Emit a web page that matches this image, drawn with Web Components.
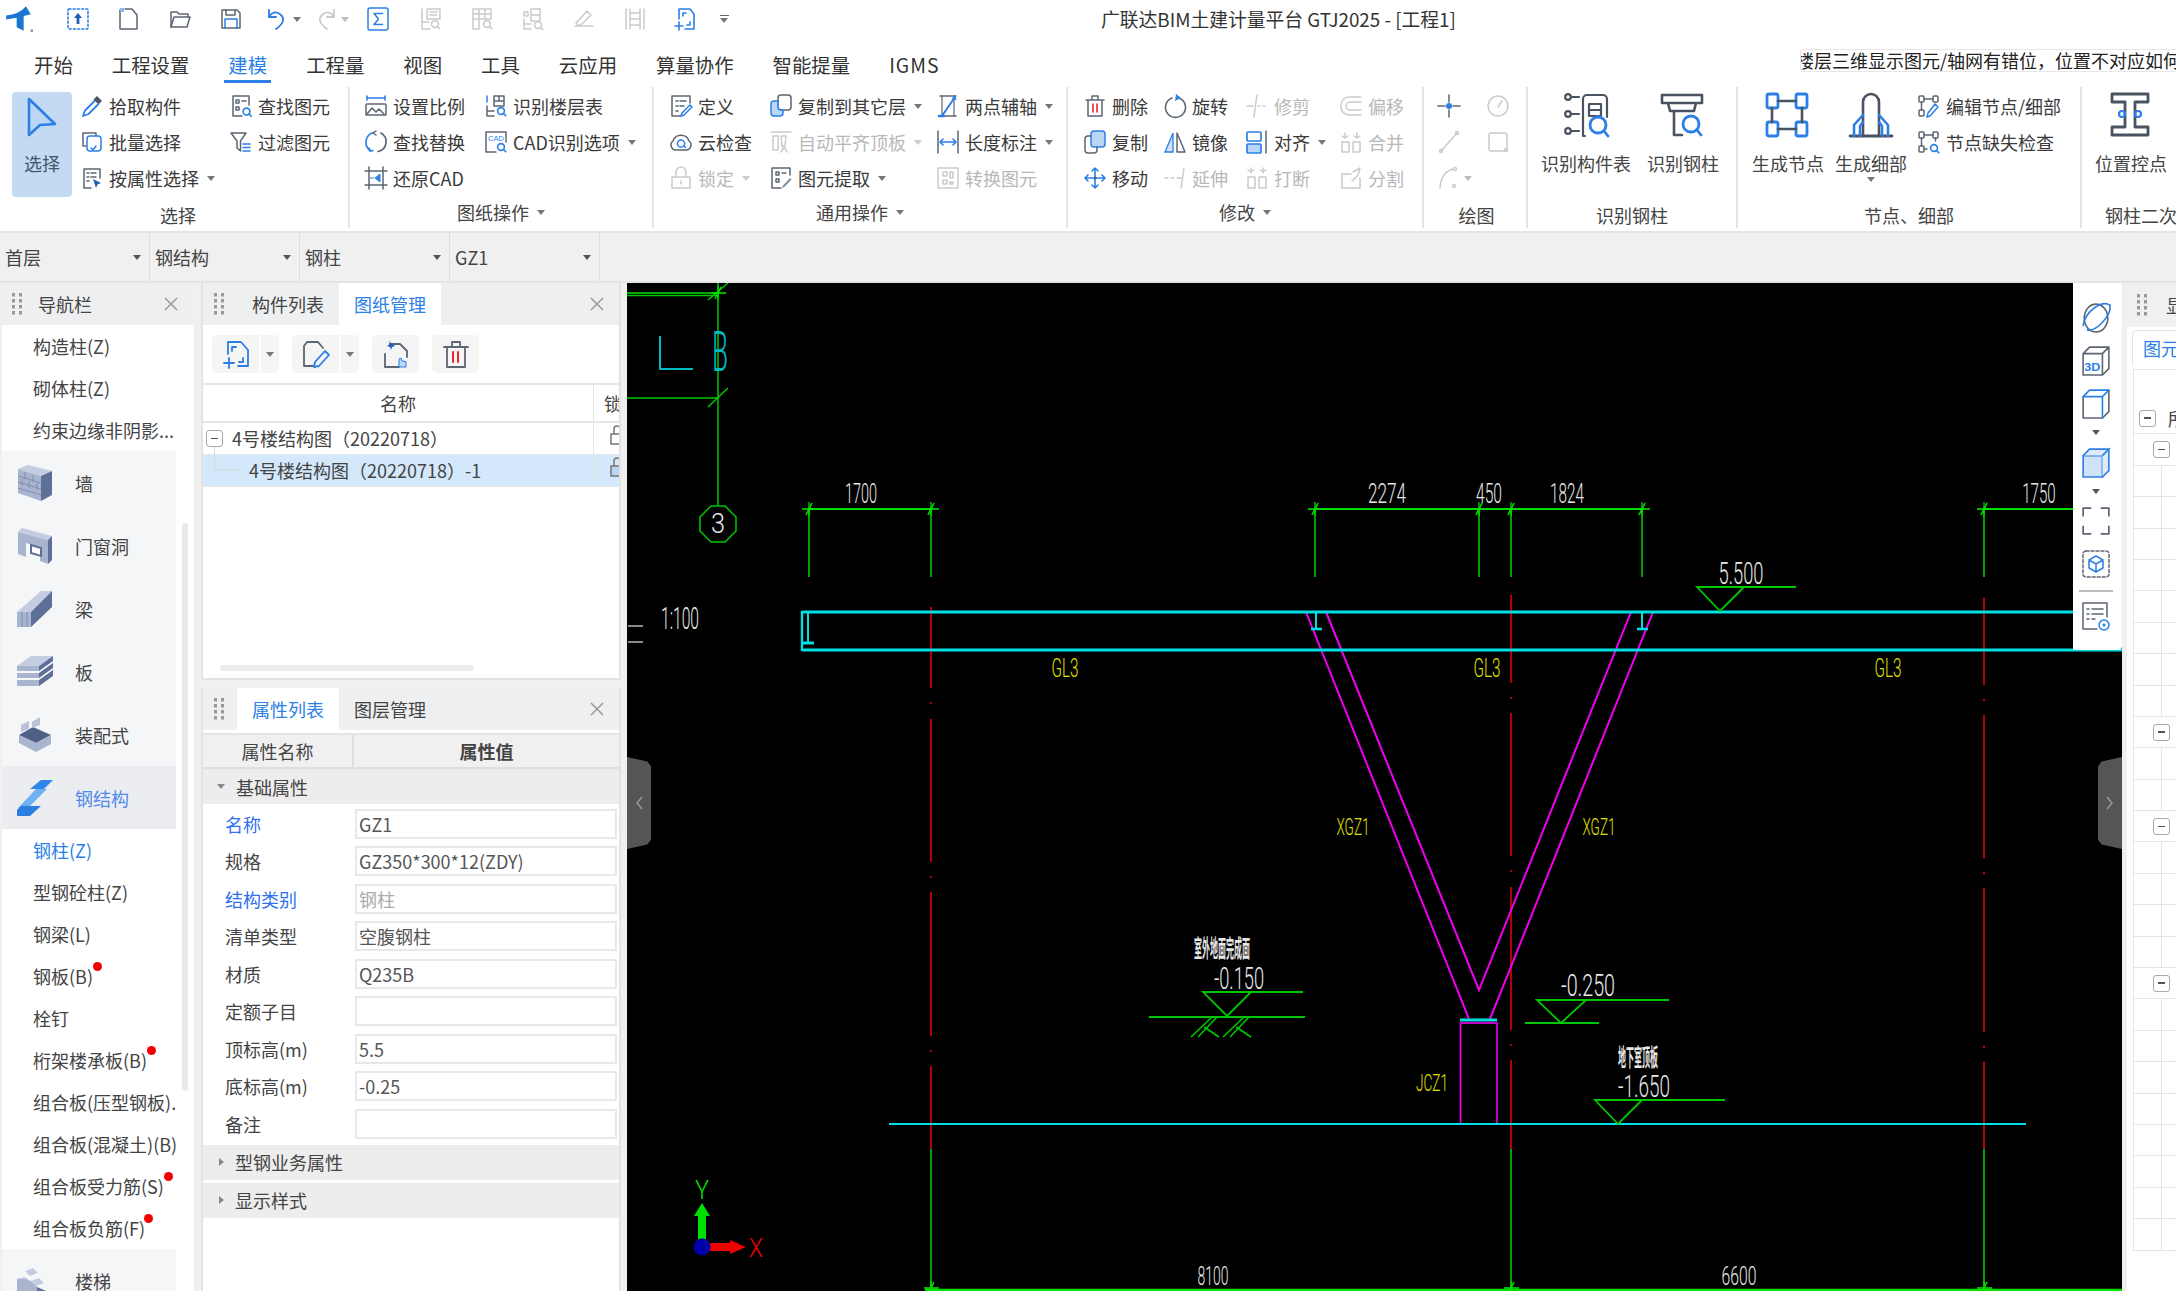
<!DOCTYPE html>
<html lang="zh"><head><meta charset="utf-8"><title>GTJ2025</title>
<style>html,body{margin:0;padding:0;background:#f0f0f0;overflow:hidden}body{font-family:"Noto Sans CJK SC","Liberation Sans",sans-serif}</style>
</head><body><gtj-app></gtj-app>
<script>
const G='#5c6572',B='#2b7fe6',D='#c8ccd0',R='#e8262a',L='#b9d6f6';
const s=(c=G,w=1.5)=>`fill="none" stroke="${c}" stroke-width="${w}" stroke-linecap="round" stroke-linejoin="round"`;
const mag=(x=17,y=17,c=B)=>`<circle cx="${x}" cy="${y}" r="3.4" ${s(c,1.6)}/><path d="M${x+2.4} ${y+2.4}l2.4 2.4" ${s(c,1.6)}/>`;
const ICONS={
logo:`<path d="M1 9Q12 8 18 1l4 7-6 1.500V22l-6-3V11L1 12.500Z" fill="#1b76d2"/><rect x="22" y="21" width="2" height="2" fill="#888"/>`,
upload:`<rect x="2" y="2" width="20" height="20" rx="1" ${s(B,1.6)} stroke-dasharray="2 2.2"/><path d="M12 6l-4 5h2.6v6h2.8v-6H16z" fill="#1f5fb8"/>`,
newdoc:`<path d="M3 3v19h17V8l-5-6H8" ${s(G)}/><path d="M3 1h4v4H3z" fill="#8db5e8"/>`,
open:`<path d="M3 20V5h6l2 2h9v3" ${s(G)}/><path d="M3 20l3-10h16l-3 10z" ${s(G)}/>`,
save:`<path d="M3 3h15l3 3v15H3z" ${s(G)}/><path d="M7 3v5h9V3" ${s(G)}/><path d="M6 21v-9h12v9" ${s(B)}/>`,
undo:`<path d="M6 3v7h7" ${s(B,1.8)}/><path d="M6 9.5Q12 2 18 8t-5 14" ${s(B,1.8)}/>`,
redo:`<path d="M18 3v7h-7" ${s(D,1.8)}/><path d="M18 9.5Q12 2 6 8t5 14" ${s(D,1.8)}/>`,
sigma:`<rect x="2" y="1" width="20" height="22" rx="2" ${s(B,1.5)}/><path d="M16.5 6.5H8l4.5 5.5-4.5 5.5h8.5" ${s(B,1.5)}/>`,
t1:`<path d="M8 2h13v10H8zM11 5h7M11 8h7" ${s(D)}/><path d="M3 2v20M3 22h8M3 15h7" ${s(D)}/>${mag(16,17,D)}`,
t2:`<path d="M3 2h18v10H3zM9 2v20M15 2v10M3 7h18M3 12v10h6" ${s(D)}/>${mag(17,17,D)}`,
t3:`<path d="M10 2h9v12h-9zM10 8h9M3 5h4v4H3zM3 12v10h7M3 17h7" ${s(D)}/>${mag(17,18,D)}`,
t4:`<path d="M3 19h18M7 19l-3-3 3-3 8-9 4 4-8 8z" ${s(D)}/>`,
t5:`<path d="M3 2v20M21 2v20M7 2v20M17 2v20M7 6h10M7 12h10M7 18h10" ${s(D)}/>`,
adddraw:`<path d="M5 12V2h11l4 5v15h-9" ${s(B,1.6)}/><path d="M9 6h3M9 6v3M16 15v3h-3M1 19h8M5 15v8" ${s(B,1.6)}/>`,
pick:`<path d="M17 2l5 5-3.5 3.5-5-5z" fill="#4e5663"/><path d="M14.5 7L5 16.5 3 22l5.5-2L18 10.5" ${s(B,1.8)}/>`,
batch:`<path d="M6 16H3V3h13v3" ${s(G)}/><rect x="7" y="6" width="14" height="15" rx="3" ${s(B)}/><path d="M11 18l2 2 3-4" ${s(B)}/>`,
propsel:`<path d="M20 12V3H4v19h7" ${s(G)}/><path d="M7 7h2M11 7h5M7 11h2M11 11h5M7 15h2" ${s(G)}/><path d="M13 13l8 4-3.5 1.5L16 22z" fill="#1f5fb8"/>`,
findel:`<path d="M20 11V2H4v20h9" ${s(G)}/><path d="M7 6h3v3H7zM7 13h3v3H7zM13 7h4" ${s(G)}/>${mag(17.5,17.5)}`,
filter:`<path d="M2 3h15l-5.5 8v10L8 18v-7z" ${s(G)}/><path d="M14 14h7M14 17.5h7M14 21h7" ${s(B,1.6)}/>`,
scale:`<path d="M3 10h18a1 1 0 0 1 1 1v10H2V11a1 1 0 0 1 1-1z" ${s(G)}/><path d="M3 20l5-6 4 4 3-3 5 5" ${s(G)}/><path d="M3 2v4M21 2v4M3 4h18" ${s(B,1.6)}/>`,
floor:`<path d="M10 2h10v10H10zM10 7h10M15 2v5M3 12v10h7M3 17h7" ${s(G)}/><path d="M3 2v6" ${s(B)}/>${mag(17,17)}`,
replace:`<path d="M10 2.5A10 10 0 0 0 7 21" ${s(B,1.7)}/><path d="M14 21.5A10 10 0 0 0 17 3" ${s(G,1.7)}/><path d="M12 1l-3 2 3 2" ${s(G)}/><path d="M5 18l1 3 3-.5" ${s(B)}/>`,
cadopt:`<path d="M12 22H2V2h20v10" ${s(G)}/><text x="4" y="11" font-family="Liberation Sans" font-size="7.5" fill="${B}">CAD</text>${mag(17,17)}`,
restore:`<path d="M5 1v22M19 1v22M1 5h22M1 19h22" ${s(G)}/><path d="M16 8l-5 4 5 4zM10 12h-4" fill="${B}" stroke="${B}"/>`,
define:`<path d="M21 9V2H3v20h9" ${s(G)}/><path d="M7 7h2M11 7h6M7 12h2M11 12h4M7 17h2" ${s(G)}/><path d="M21 11l2 2-8 8-3 1 1-3z" ${s(B)}/>`,
cloud:`<path d="M7 20a5 5 0 0 1-3-9 8.5 8.5 0 0 1 16 0 5 5 0 0 1-3 9z" ${s(G)}/><circle cx="12" cy="13.5" r="3.6" ${s(B)}/><path d="M15 16l1.5 1.5" ${s(B)}/>`,
lock:`<path d="M3 11h18v11H3zM7 11V6a5 5 0 0 1 10 0v5M12 15v3" ${s(D)}/>`,
copyto:`<rect x="9" y="1" width="13" height="15" rx="3" ${s(G)}/><path d="M9 7H5a3 3 0 0 0-3 3v9a3 3 0 0 0 3 3h6a3 3 0 0 0 3-3v-3H12a3 3 0 0 1-3-3z" fill="${L}" stroke="${B}" stroke-width="1.5"/>`,
autoalign:`<path d="M2 2h20M4 6v14h5V6zM12 6h5l-1 10h-3zM12 22l3-5 3 5" ${s(D)}/>`,
extract:`<path d="M21 9V2H3v20h9" ${s(G)}/><path d="M7 6h3v3H7zM7 13h3v3H7zM13 7h4" ${s(G)}/><path d="M21 12l1.5 1.5-7 7.5-2.5 1 1-2.5z" fill="#8a8f96"/>`,
twopoint:`<path d="M4 2h16M4 22h16" ${s(G)}/><path d="M6 2v20M18 2v20" ${s(G,1.2)}/><path d="M6 22L19 3" ${s(B,2)}/><path d="M18 1l3 5-5-1z" fill="${B}"/><path d="M3 22h5" ${s(B,2.5)}/>`,
lendim:`<path d="M2 1v22M22 1v22" ${s(G)}/><path d="M4 12h16M7 9l-3 3 3 3M17 9l3 3-3 3" ${s(B,1.6)}/>`,
convert:`<path d="M2 2h20v20H2zM7 6h4v4H7zM14 6h3v6h-3zM7 14h4v4H7zM14 16h3v2h-3z" ${s(D)}/>`,
del:`<path d="M3 6h18M9 6V2h6v4M5 6v16h14V6" ${s(G)}/><path d="M10 10v8M14 10v8" ${s(R,1.6)}/>`,
rotate:`<path d="M9 4a10 10 0 1 0 7 0" ${s(G,1.6)}/><path d="M13 0l5 4-6 3z" fill="${B}"/>`,
trim:`<path d="M12 1l-3 22M2 12h6" ${s(D)}/><path d="M13 12h2M18 12h2" ${s(D)}/>`,
offset:`<path d="M22 3H10a8 8 0 0 0-8 9 8 8 0 0 0 8 9h12M22 8H11a4 4 0 0 0 0 8h11" ${s(D)}/>`,
copy:`<rect x="8" y="1" width="14" height="16" rx="3" fill="${L}" stroke="${B}" stroke-width="1.5"/><path d="M8 6H5a3 3 0 0 0-3 3v11a3 3 0 0 0 3 3h6a3 3 0 0 0 3-3v-3" ${s(G)}/>`,
mirror:`<path d="M10 3L2 22h8z" fill="#cfe2fa" stroke="${B}" stroke-width="1.3"/><path d="M14 3l8 19h-8z" ${s(G)}/>`,
alignx:`<rect x="2" y="2" width="14" height="9" rx="1" ${s(B,1.7)}/><rect x="2" y="14" width="14" height="9" rx="1" fill="${L}" stroke="${B}" stroke-width="1.7"/><path d="M21 1v22" ${s(G)}/>`,
merge:`<path d="M3 12h7v10H3zM14 12h7v10h-7zM6 3v4M3 6l3 2 3-2M18 3v4M15 6l3 2 3-2" ${s(D)}/>`,
move:`<path d="M12 2v20M2 12h20M9 5l3-3 3 3M9 19l3 3 3-3M5 9l-3 3 3 3M19 9l3 3-3 3" ${s(B,1.6)}/><circle cx="12" cy="12" r="1.5" fill="${G}"/>`,
extend:`<path d="M2 12h3M8 12h3M14 12h4M21 2l-3 20" ${s(D)}/>`,
breakx:`<path d="M3 11h7v11H3zM14 11h7v11h-7zM6 2v5M18 2v5M3 4l3 2M9 4L6 6M15 4l3 2M21 4l-3 2" ${s(D)}/>`,
split:`<path d="M21 12v10H3V8h9M14 6l7-4-2 7-6 6" ${s(D)}/>`,
point:`<path d="M12 1v7M12 16v7M1 12h7M16 12h7" ${s(G)}/><circle cx="12" cy="12" r="3" fill="${B}"/>`,
gauge:`<circle cx="12" cy="12" r="10" ${s(D)}/><path d="M12 13l4-6" ${s(D)}/>`,
line:`<path d="M4 21L20 3" ${s(D)}/><circle cx="4" cy="21" r="1.5" ${s(D)}/><circle cx="20" cy="3" r="1.5" ${s(D)}/>`,
rectd:`<rect x="3" y="3" width="18" height="18" rx="2" ${s(D)}/><circle cx="20" cy="20" r="1.5" ${s(D)}/>`,
arc:`<path d="M3 22Q4 6 16 3" ${s(D)}/><circle cx="18" cy="3" r="1.5" ${s(D)}/><circle cx="17" cy="20" r="1.5" ${s(D)}/>`,
idtable:`<g ${s('#4a5361',2.2)}><circle cx="5" cy="5" r="2.8"/><circle cx="5" cy="22" r="2.8"/><circle cx="5" cy="39" r="2.8"/><path d="M8 5h8M8 22h8M8 39h8M22 44h-2V7a4 4 0 0 1 4-4h16a4 4 0 0 1 4 4v18M26 12h12v12H26zM26 18h12"/></g><circle cx="35" cy="33" r="8" ${s(B,2.8)}/><path d="M41 39l4 5" ${s(B,2.8)}/>`,
idsteel:`<g ${s('#4a5361',2.6)}><path d="M2 3h40v8H2zM8 11h28l-2 8H10zM14 19v24h8"/></g><circle cx="31" cy="32" r="8" ${s(B,2.8)}/><path d="M37 38l4 5" ${s(B,2.8)}/>`,
gennode:`<g ${s(B,2.8)}><rect x="2" y="2" width="11" height="14" rx="2"/><rect x="31" y="2" width="11" height="14" rx="2"/><rect x="2" y="30" width="11" height="14" rx="2"/><rect x="31" y="30" width="11" height="14" rx="2"/></g><path d="M13 9h18M13 37h18M7 16v14M37 16v14" ${s('#4a5361',2.6)}/>`,
gendetail:`<path d="M2 44h42" ${s('#4a5361',2.8)}/><path d="M15 44V10a8 8 0 0 1 16 0v34" ${s('#4a5361',2.6)}/><path d="M15 23L6 33v11M31 23l9 10v11M15 30l-3 4v10M31 30l3 4v10" ${s(B,2.6)}/>`,
editnode:`<g ${s(G,1.5)}><rect x="2" y="2" width="5" height="6" rx="1"/><rect x="16" y="2" width="5" height="6" rx="1"/><rect x="2" y="16" width="5" height="6" rx="1"/><path d="M7 5h9M4.5 8v8"/></g><path d="M18 10l3 3-8 9-3 1 1-4z" ${s(B,1.5)}/>`,
missnode:`<g ${s(G,1.5)}><rect x="2" y="2" width="5" height="6" rx="1"/><rect x="16" y="2" width="5" height="6" rx="1"/><rect x="2" y="16" width="5" height="6" rx="1"/><path d="M7 5h9M4.5 8v8M18.5 8v3M7 19h3"/></g>${mag(17,18)}`,
ctrl:`<path d="M4 2h36v8H27v25h13v8H4v-8h13V10H4z" ${s('#4a5361',2.8)}/><circle cx="14" cy="22" r="3" ${s(B,2.2)}/><circle cx="30" cy="22" r="3" ${s(B,2.2)}/>`,
padd:`<path d="M6 14V2h13l7 8v16H16" ${s(B,1.8)}/><path d="M10 7h4M10 7v4M21 18v4h-4M2 23h10M7 18v10" ${s(B,1.8)}/>`,
pedit:`<path d="M21 8l-5-6H5L2 6v20h10" ${s(G,1.8)}/><path d="M23 11l4 4-10 11-5 1 1-5z" ${s(B,1.8)}/>`,
phand:`<path d="M8 4h10l7 7v6M3 14v13h14" ${s(G,1.8)}/><path d="M7 1l1 3-3 2 3 1 1 3 1-3 3-1-3-2z" fill="#1f5fb8"/><path d="M17 27v-8l2-1 1 3 4 .5v5.5z" fill="#bdd6f6" stroke="${B}"/>`,
ptrash:`<path d="M2 7h24M10 7V2h8v5M5 7v20h18V7" ${s(G,1.8)}/><path d="M11 12v10M16 12v10" ${s(R,2)}/>`,
orbit:`<ellipse cx="14" cy="15" rx="11" ry="13" ${s(G,1.5)}/><path d="M2 22C4 8 20 -2 27 3" ${s(B,1.5)}/><path d="M27 3C29 12 14 28 6 26" ${s(B,1.5)}/>`,
d3:`<path d="M2 8l6-6h18v20l-6 6H2zM2 8h18v20M20 8l6-6" ${s(G,1.5)}/><text x="3" y="24" font-family="Liberation Sans" font-size="10" font-weight="700" fill="${B}" textLength="15" lengthAdjust="spacingAndGlyphs">3D</text>`,
cube:`<path d="M2 8v20h18l6-6V2" ${s(G,1.5)}/><path d="M2 8l6-6h18l-6 6H2M20 8v20" ${s(B,1.5)}/>`,
cubeb:`<path d="M2 8h18v20H2z" fill="#cfe2fa" stroke="${B}" stroke-width="1.5"/><path d="M2 8l6-6h18l-6 6M20 8l6-6v20l-6 6" fill="#dfeafa" stroke="${B}" stroke-width="1.5"/>`,
bracket:`<path d="M2 9V2h7M19 2h7v7M26 19v7h-7M9 26H2v-7" ${s(G,1.6)}/>`,
dcube:`<rect x="2" y="2" width="26" height="26" rx="3" ${s(G,1.5)} stroke-dasharray="3 2"/><path d="M15 7l7 4v8l-7 4-7-4v-8zM8 11l7 4 7-4M15 15v8" ${s(B,1.5)}/>`,
list:`<path d="M26 16V2H2v26h14" ${s(G,1.5)}/><path d="M6 8h2M11 8h11M6 13h2M11 13h11M6 18h2M11 18h3" ${s(G,1.5)}/><circle cx="23" cy="24" r="5" ${s(B,1.5)}/><circle cx="23" cy="24" r="1.5" fill="${B}"/>`,
wall:`<path d="M1 4l10-4 24 6-11 5z" fill="#c3cce0"/><path d="M1 4l23 7v25L1 28z" fill="#a9b5cf"/><path d="M24 11l11-5v24l-11 6z" fill="#5f7098"/><path d="M1 11l23 7M1 17l23 7M1 23l23 7M8 7v7M16 10v7M5 14v7M12 16v7M20 18v7" stroke="#7f8eb0" fill="none"/>`,
door:`<path d="M1 4l4-4 30 8-4 4z" fill="#c3cce0"/><path d="M1 4l30 8v24l-8-3V19L9 15v14l-8-3z" fill="#a9b5cf"/><path d="M31 12l4-4v24l-4 4z" fill="#5f7098"/><path d="M14 17l10 3v8l-10-3z" fill="#fff" stroke="#5f7098" stroke-width="2"/>`,
beam:`<path d="M0 21h14v15H0z" fill="#a9b5cf"/><path d="M0 21L24 0h11L14 21z" fill="#c3cce0"/><path d="M14 21L35 0v16L14 36z" fill="#5f7098"/><path d="M5 21v15M10 21v15" stroke="#7f8eb0"/>`,
slab:`<path d="M0 12L14 2h22L22 12z" fill="#c3cce0"/><path d="M0 12h22v5H0zM0 19h22v5H0zM0 26h22v6H0z" fill="#a9b5cf"/><path d="M22 12L36 2v5L22 17zM22 19l14-10v5L22 24zM22 26l14-10v6L22 32z" fill="#5f7098"/>`,
prefab:`<path d="M2 18l14-8 18 8-15 8z" fill="#4f6088"/><path d="M2 18v8l17 9v-9zM19 26v9l15-8v-9z" fill="#a9b5cf"/><path d="M4 8l8-4v8l-8 3zM15 5l8-5v8l-8 3z" fill="#b9c3d8"/>`,
steel:`<path d="M19 9h11L11 28H1z" fill="#6fb0f4"/><path d="M13 9L24 0h12l-9 9z" fill="#2f86e8"/><path d="M4 26h20L13 36H0v-6z" fill="#2a7de1"/>`,
stair:`<path d="M0 16l8-2 5 4-8 3zM8 8l8-3 5 5-8 3zM14 18l8-3 5 5-8 3z" fill="#c3cce0"/><path d="M0 16v16l20 8V24l-6-6-6-2z" fill="#a9b5cf"/><path d="M20 24l14 6v10l-14 0z" fill="#5f7098"/>`
};
function def(name,css,html,init){customElements.define(name,class extends HTMLElement{constructor(){super();this.attachShadow({mode:'open'})}
connectedCallback(){const a=n=>this.getAttribute(n);const h=typeof html==='function'?html(a,this):html;this.shadowRoot.innerHTML=`<style>${css}</style>${h}`;if(init)init(this,a)}})}

def('x-icon',':host{display:inline-flex;align-items:center;justify-content:center;flex:none}svg{display:block;overflow:visible}',a=>{const n=a('name');const v=a('vb')||24;const w=a('w')||a('size')||24;const h=a('h')||a('size')||24;return `<svg width="${w}" height="${h}" viewBox="0 0 ${v} ${v}">${ICONS[n]||''}</svg>`});
def('x-tri',':host{display:inline-block;width:0;height:0;border-left:4px solid transparent;border-right:4px solid transparent;border-top:5px solid var(--c,#777);flex:none}','');

def('gtj-title',`:host{display:flex;height:48px;align-items:center;background:#fff;flex:none}
.q{display:flex;align-items:center;width:1101px;flex:none;margin-top:-10px}
.c{display:flex;justify-content:center;width:51px;flex:none}
.t{font-size:18.8px;color:#333;line-height:24px;white-space:nowrap;margin-top:-10px}`,()=>{const cell=(n,w=51)=>`<span class="c" style="width:${w}px"><x-icon name="${n}" size="24"></x-icon></span>`;
return `<div class="q"><span class="c" style="width:37px"><x-icon name="logo" size="28"></x-icon></span><span style="width:15px"></span>${cell('upload')}${cell('newdoc')}${cell('open')}${cell('save',52)}${cell('undo',36)}<span style="width:10px;display:flex"><x-tri></x-tri></span>${cell('redo',50)}<span style="width:10px;display:flex;--c:#bbb;margin-left:-12px"><x-tri></x-tri></span>${cell('sigma',54)}${cell('t1')}${cell('t2')}${cell('t3')}${cell('t4')}${cell('t5')}${cell('adddraw')}<span class="c" style="width:26px;flex-direction:column;align-items:center;gap:2px"><span style="width:9px;height:1.5px;background:#666"></span><x-tri></x-tri></span></div><div class="t">广联达BIM土建计量平台 GTJ2025 - [工程1]</div>`});

def('gtj-menu',`:host{display:flex;height:35px;align-items:center;background:#fff;padding-left:30px;gap:31px;flex:none}
span.m{font-size:19.4px;line-height:33px;height:35px;padding:0 4px;color:#333;box-sizing:border-box;white-space:nowrap}
span.on{color:${B};border-bottom:3px solid ${B}}
.tip{margin-left:auto;width:376px;height:23px;overflow:hidden;background:#fff;border:1px solid #e6e6e6;border-right:0;border-radius:3px 0 0 3px;box-sizing:border-box;font-size:18px;line-height:21px;color:#222;white-space:nowrap;text-indent:-5px;margin-bottom:10px}`,
()=>['开始','工程设置','建模','工程量','视图','工具','云应用','算量协作','智能提量','IGMS'].map(t=>`<span class="m ${t=='建模'?'on':''}" ${t=='IGMS'?'style="letter-spacing:1px"':''}>${t}</span>`).join('')+'<div class="tip">楼层三维显示图元/轴网有错位，位置不对应如何处理</div>');

def('gtj-ribbon',`:host{display:flex;height:150px;background:#fff;flex:none;padding-top:4px;box-sizing:border-box;overflow:hidden;border-bottom:2px solid #e4e4e4}`,'<slot></slot>');
def('rb-group',`:host{display:flex;flex-direction:column;height:141px;box-sizing:border-box;border-right:2px solid #e4e4e4;flex:none;overflow:hidden}
.b{height:112px;padding-top:1px;box-sizing:border-box;display:flex}
.l{flex:1;display:flex;align-items:center;justify-content:center;gap:8px;font-size:18px;line-height:24px;color:#444;white-space:nowrap;padding-top:3px}
.l.up{padding-top:0;padding-bottom:3px}.l.left{justify-content:flex-start;padding-left:23px}`,
a=>`<div class="b"><slot></slot></div><div class="l ${a('arrow')!=null?'up':''} ${a('left')!=null?'left':''}" ${a('lp')?`style="padding-left:${a('lp')}px"`:''}>${a('label')}${a('arrow')!=null?'<x-tri></x-tri>':''}</div>`,
(t,a)=>{t.style.width=a('w')+'px';t.shadowRoot.querySelector('.b').style.paddingLeft=a('pl')+'px'});
def('rb-grid',`:host{display:grid;grid-auto-rows:36px;align-items:center;flex:none}`,'<slot></slot>',(t,a)=>{t.style.gridTemplateColumns=a('cols').split(' ').map(x=>x+'px').join(' ')});
def('rb-small',`:host{display:flex;align-items:center;gap:5px;white-space:nowrap;font-size:18px;color:#3a3a3a;line-height:24px}
:host([off]){color:#b8b8b8}x-tri{margin-left:3px}`,a=>`<x-icon name="${a('icon')}"></x-icon><slot></slot>${a('arrow')!=null?'<x-tri></x-tri>':''}`);
def('rb-big',`:host{display:flex;flex-direction:column;align-items:center;flex:none;font-size:18px;line-height:24px;color:#444;white-space:nowrap;padding-top:3px}
.i{height:48px;display:flex;align-items:center;justify-content:center;margin-bottom:12px}x-tri{margin-top:2px}`,a=>`<div class="i"><x-icon name="${a('icon')}" vb="46" size="46"></x-icon></div><slot></slot>${a('arrow')!=null?'<x-tri></x-tri>':''}`,(t,a)=>{t.style.width=a('w')+'px'});
def('rb-select',`:host{display:flex;flex-direction:column;align-items:center;width:60px;height:105px;margin:4px 13px 0 12px;border-radius:4px;background:#c3daf2;font-size:18px;line-height:24px;color:#40566f;flex:none;box-sizing:border-box;padding-top:5px}
svg{display:block;margin-bottom:14px}`,`<svg width="32" height="40" viewBox="0 0 32 40"><path d="M3 2L29 27 14 28 3 38z" fill="#bcd6f4" stroke="${B}" stroke-width="2.6" stroke-linejoin="round"/></svg><slot></slot>`);

def('gtj-combos',`:host{display:flex;height:50px;background:#f0f0f0;flex:none;box-sizing:border-box;border-bottom:2px solid #e4e4e4}`,'<slot></slot>');
def('gtj-combo',`:host{display:flex;align-items:center;justify-content:space-between;width:150px;box-sizing:border-box;padding:0 8px 0 5px;border-right:1px solid #ddd;font-size:18px;color:#444;height:48px}x-tri{--c:#555}`,'<slot></slot><x-tri></x-tri>');

const GRIP=`<svg style="flex:none" width="12" height="24" viewBox="0 0 12 24"><g fill="#999"><rect x="1" y="1" width="3" height="3.5"/><rect x="8" y="1" width="3" height="3.5"/><rect x="1" y="7" width="3" height="3.5"/><rect x="8" y="7" width="3" height="3.5"/><rect x="1" y="13" width="3" height="3.5"/><rect x="8" y="13" width="3" height="3.5"/><rect x="1" y="19" width="3" height="3.5"/><rect x="8" y="19" width="3" height="3.5"/></g></svg>`;
const CLOSE=`<svg width="14" height="14" viewBox="0 0 14 14"><path d="M1 1l12 12M13 1L1 13" stroke="#999" stroke-width="1.5"/></svg>`;
def('nav-panel',`:host{display:flex;flex-direction:column;flex:none;background:#fff;box-sizing:border-box;margin-left:2px;width:192px;position:relative;overflow:hidden;height:1008px}
.h{height:42px;background:#eeeff0;display:flex;align-items:center;padding-left:9px;font-size:18px;color:#444;flex:none}
.h span{margin-left:15px;flex:1}.h svg:last-child{margin-right:16px}
.list{width:174px}
.sb{position:absolute;left:180px;top:240px;width:6px;height:568px;background:#e9e9e9;border-radius:3px}`,
`<div class="h">${GRIP}<span>导航栏</span>${CLOSE}</div><div class="list"><slot></slot></div><div class="sb"></div>`);
def('nav-item',`:host{display:block;height:42px;line-height:42px;padding-left:31px;font-size:18px;color:#444;white-space:nowrap;position:relative}
:host([on]){color:${B}} i{position:absolute;width:9px;height:9px;border-radius:50%;background:#f10000}`,a=>`<slot></slot>${a('dot')?`<i style="left:${a('dot')-6}px;top:${a('dy')}px"></i>`:''}`);
def('nav-cat',`:host{display:flex;align-items:center;height:63px;background:#f5f6f8;font-size:18px;color:#444;box-sizing:border-box;padding-left:15px}
:host([on]){background:#ecedf0;color:#4f8bea}.t{margin-left:22px}`,a=>`<x-icon name="${a('icon')}" vb="36" size="36"></x-icon><span class="t"><slot></slot></span>`);

def('dock-panel',`:host{display:flex;flex-direction:column;width:420px;border:2px solid #e3e3e3;border-top:0;box-sizing:border-box;background:#fff;overflow:hidden;flex:none}
.h{height:42px;background:#eeeff0;display:flex;font-size:18px;color:#444;flex:none;align-items:stretch}
.g{width:34px;display:flex;align-items:center;justify-content:center;flex:none;padding-right:2px;box-sizing:border-box}
.tb{width:102px;display:flex;align-items:center;justify-content:center}.tb.on{background:#fff;color:${B}}
.x{margin-left:auto;display:flex;align-items:center;padding-right:15px}`,
a=>{const act=a('active');return `<div class="h"><div class="g">${GRIP}</div>${a('tabs').split(',').map(t=>`<div class="tb ${t==act?'on':''}">${t}</div>`).join('')}<div class="x">${CLOSE}</div></div><slot></slot>`},
(t,a)=>{t.style.height=a('h')+'px'});
def('tree-exp',`:host{display:inline-flex;width:17px;height:17px;border:1.5px solid #a8a8a8;border-radius:3px;align-items:center;justify-content:center;background:#fff;box-sizing:border-box;flex:none}
i{display:block;width:7px;height:1.5px;background:#555}`,'<i></i>');
def('draw-toolbar',`:host{display:flex;height:60px;box-sizing:border-box;padding:10px 0 0 9px;border-bottom:2px solid #e6e6e6;gap:13px;flex:none}
.b{display:flex;height:38px;background:#f5f5f5;border-radius:5px;overflow:hidden}
.m{width:47px;display:flex;align-items:center;justify-content:center}
.d{width:18px;border-left:2px solid #fff;display:flex;align-items:center;justify-content:center}
x-tri{--c:#777}`,()=>{const b=(i,d)=>`<div class="b"><div class="m"><x-icon name="${i}" vb="28" size="28"></x-icon></div>${d?'<div class="d"><x-tri></x-tri></div>':''}</div>`;return b('padd',1)+b('pedit',1)+b('phand')+b('ptrash')});
def('draw-table',`:host{display:block;flex:1;position:relative;font-size:18px;color:#444;overflow:hidden}
.hd{height:36px;display:flex;border-bottom:2px solid #e6e6e6;line-height:36px}
.c1{width:393px;text-align:center;border-right:1px solid #e6e6e6;box-sizing:border-box}
.c2{width:25px;overflow:hidden;padding-left:10px;box-sizing:border-box;white-space:nowrap}
.r{height:31px;display:flex;border-bottom:1px solid #e6e6e6;line-height:31px;align-items:center;white-space:nowrap;position:relative}
.r .n{width:393px;border-right:1px solid #e6e6e6;box-sizing:border-box;height:31px;display:flex;align-items:center;gap:9px;padding-left:3px}
.sel{background:#d3e8fb}
.cn{position:absolute;left:11px;top:-8px;width:27px;height:23px;border-left:1px solid #d8d8d8;border-bottom:1px solid #d8d8d8;box-sizing:border-box}
.lk{padding-left:15px;overflow:hidden;width:25px;box-sizing:border-box}
.sb{position:absolute;left:17px;bottom:7px;width:254px;height:6px;background:#ededed;border-radius:3px}`,
`<div class="hd"><div class="c1">名称</div><div class="c2">锁定</div></div>
<div class="r"><div class="n"><tree-exp></tree-exp><span>4号楼结构图（20220718）</span></div><div class="lk"><svg width="16" height="22" viewBox="0 0 16 22"><path d="M5 10V5a3 3 0 0 1 6 0v5M2 10h13v10H2z" fill="#fff" stroke="#777" stroke-width="1.5"/></svg></div></div>
<div class="r sel"><i class="cn"></i><div class="n" style="padding-left:46px"><span>4号楼结构图（20220718）-1</span></div><div class="lk"><svg width="16" height="22" viewBox="0 0 16 22"><path d="M5 10V5a3 3 0 0 1 6 0v5" fill="none" stroke="#777" stroke-width="1.5"/><path d="M2 10h13v10H2z" fill="#bcd6f4" stroke="#777" stroke-width="1.5"/></svg></div></div><div class="sb"></div>`);
def('prop-table',`:host{display:block;font-size:18px;color:#444;flex:1}
.hd{display:flex;height:36px;background:#f0f0f0;border-bottom:2px solid #dedede;line-height:33px;text-align:center;box-sizing:border-box;margin-top:3px;border-top:2px solid #e4e4e4}
.a{width:151px;border-right:2px solid #dedede;box-sizing:border-box}.b{flex:1;font-weight:700}
.sec{height:35px;background:#ededed;display:flex;align-items:center;padding-left:14px;gap:11px;margin-bottom:1px}
.tr{width:0;height:0;flex:none}
.dn{border-left:4px solid transparent;border-right:4px solid transparent;border-top:5px solid #888}
.rt{border-top:4px solid transparent;border-bottom:4px solid transparent;border-left:5px solid #888;margin-left:2px}
slot{display:block}`,
`<div class="hd"><div class="a">属性名称</div><div class="b">属性值</div></div>
<div class="sec"><span class="tr dn"></span>基础属性</div><slot></slot>
<div class="sec" style="margin-top:2px;margin-bottom:3px"><span class="tr rt"></span><span>型钢业务属性</span></div><div class="sec"><span class="tr rt"></span><span>显示样式</span></div>`);
def('prop-row',`:host{display:flex;height:37.5px;align-items:center;padding-left:22px;font-size:18px;color:#444;white-space:nowrap}
.n{width:130px;flex:none}.n.bl{color:#2f6ff0}
.v{width:262px;height:30px;border:2px solid #e8e8e8;box-sizing:border-box;line-height:26px;padding-left:2px;color:#555;overflow:hidden}
.v.g{color:#aaa}`,a=>`<div class="n ${a('blue')!=null?'bl':''}"><slot></slot></div><div class="v ${a('gray')!=null?'g':''}">${a('v')||''}</div>`);

const GR='#00c800',BG='#00e000',CY='#00dfe4',MG='#f000f0',RD='#c80000',YL='#e0e000',WH='#e8e8e8';
function ln(x1,y1,x2,y2,c=GR,w=1.6){return `<line x1="${x1}" y1="${y1}" x2="${x2}" y2="${y2}" stroke="${c}" stroke-width="${w}"/>`}
function tx(t,cx,cy,len,h,c=WH,extra=''){const fs=h/0.72;return `<text x="${cx-len/2}" y="${cy+h/2}" font-family="Roboto,'Noto Sans CJK SC',sans-serif" font-weight="300" font-size="${fs}" fill="${c}" textLength="${len}" lengthAdjust="spacingAndGlyphs" ${extra}>${t}</text>`}
function tick(x,y){return ln(x-7,y,x+8,y,BG,1.6)+ln(x-3,y+6,x+3,y-6,BG,1.6)+ln(x,y-7,x,y+7,BG,1.2)}
function level(x0,x1,ax,y,ay,rx){return `<polyline points="${x1},${y} ${x0},${y} ${ax},${ay} ${rx},${y}" fill="none" stroke="${GR}" stroke-width="1.8"/>`}
function redCol(x,segs){let o='';segs.forEach(([a,b])=>o+=ln(x,a,x,b,RD,1.8));return o}
function cad(){let o='';
o+=ln(627,293,718,293,BG,1.6)+ln(627,295.5,718,295.5,GR,1.6)+ln(718,283,718,506,GR,1.5)+ln(627,398,718,398,GR,1.5)+ln(708,300,728,283,GR,1.5)+ln(708,407,728,388,GR,1.5);
o+=tick(718,293);
o+=`<polyline points="660,336 660,369 693,369" fill="none" stroke="#00b8c0" stroke-width="2"/>`+tx('B',720,351,16,40,'#00b8c0');
o+=`<polygon points="711,506 725,506 736,517 736,531 725,542 711,542 700,531 700,517" fill="none" stroke="${GR}" stroke-width="1.5"/>`+tx('3',718,523,14,20);
const dy=509;
[[809,931],[1315,1479],[1479,1511],[1511,1642],[1984,2075]].forEach(([a,b])=>{o+=ln(a,dy,b,dy,BG,2)});
[809,931,1315,1479,1511,1642,1984].forEach(x=>{o+=ln(x,dy,x,577,GR,1.6)+tick(x,dy)});
o+=tx('1700',861,493,32,20)+tx('2274',1387,493,38,20)+tx('450',1489,493,26,20)+tx('1824',1567,493,34,20)+tx('1750',2039,493,33.5,20);
o+=tx('1:100',680,617,38,23);o+=ln(628,626,643,626,'#999',1.8)+ln(628,642,643,642,'#999',1.8);
[[931,[[607,688],[702,704],[719,862],[876,878],[892,1036],[1050,1052],[1066,1149]]],[1511,[[595,683],[697,699],[713,856],[870,872],[887,1030],[1044,1046],[1060,1149]]],[1984,[[598,685],[699,701],[715,858],[872,874],[888,1032],[1046,1048],[1062,1149]]]].forEach(([x,s])=>o+=redCol(x,s));
[931,1511,1984].forEach(x=>{o+=ln(x,1149,x,1291,GR,1.6)});
o+=ln(925,1290,2122,1290,BG,2.5);o+=tick(931,1288)+tick(1511,1288)+tick(1984,1288);
o+=tx('8100',1213,1275,31,19)+tx('6600',1739,1275,35,19);
o+=`<g fill="none" stroke="${MG}" stroke-width="2"><polyline points="1306,612 1469,1019"/><polyline points="1326,612 1479,990 1631,612"/><polyline points="1653,612 1490,1019"/><rect x="1460.5" y="1023" width="36.5" height="101" stroke-width="1.6"/></g>`;
o+=ln(802,612,2075,612,CY,3.2)+ln(802,650,2122,650,CY,3.2)+ln(802,611,802,651,CY,2.4);
o+=ln(808,612,808,643,CY,2)+ln(802,643,814,643,CY,3);
[1316,1642].forEach(x=>{o+=ln(x,612,x,629,CY,2)+ln(x-5,629,x+6,629,CY,2.6)});
o+=ln(889,1124,2026,1124,CY,2);o+=ln(1460,1020,1497,1020,CY,3.2);
o+=tx('GL3',1065,668,27,18,YL)+tx('GL3',1487,668,27,18,YL)+tx('GL3',1888,668,27,18,YL);
o+=tx('XGZ1',1353,826,33,17,YL)+tx('XGZ1',1599,826,33,17,YL)+tx('JCZ1',1432,1082,32,17,YL);
o+=level(1697,1796,1720,587,611,1744)+tx('5.500',1741,573,45,22);
o+=level(1203,1303,1227,992,1016,1251)+ln(1149,1017,1305,1017,GR,1.8)+tx('-0.150',1239,978,50,22);
[0,32].forEach(d=>{o+=ln(1191+d,1037,1212+d,1017,GR,1.6)+ln(1198+d,1037,1217+d,1017,GR,1.6)+ln(1204+d,1027,1219+d,1037,GR,1.6)});
o+=tx('室外地面完成面',1222,948,56,17,WH,'style="font-weight:700"');
o+=level(1537,1669,1561,1000,1023,1586)+ln(1525,1023,1599,1023,GR,1.8)+tx('-0.250',1588,985,54,22);
o+=tx('地下室顶板',1638,1057,40,17,WH,'style="font-weight:700"');
o+=level(1595,1725,1618,1100,1124,1642)+tx('-1.650',1644,1086,52,22);
o+=`<rect x="698" y="1216" width="8" height="30" fill="#00e000"/><polygon points="702,1203 710,1216 694,1216" fill="#00e000"/><rect x="710" y="1243" width="20" height="8" fill="#f00000"/><polygon points="746,1247 730,1240 730,1254" fill="#f00000"/><circle cx="702" cy="1247" r="8.5" fill="#0000a8"/>`;
o+=tx('Y',702,1190,14,18,'#00e000')+tx('X',756,1248,14,18,'#f00000');
return o}
def('cad-canvas',`:host{display:block;position:relative;width:1495px;height:1008px;background:#000;flex:none;overflow:hidden;margin-left:6px}
svg{display:block}
.hl,.hr{position:absolute;top:474px;width:24px;height:92px;background:#555;display:flex;align-items:center;justify-content:center}
.hl{left:0;clip-path:polygon(0 0,85% 5%,100% 10%,100% 90%,85% 95%,0 100%)}
.hr{right:0;clip-path:polygon(100% 0,15% 5%,0 10%,0 90%,15% 95%,100% 100%)}
.fl{position:absolute;right:0;top:0;width:49px;height:367px;background:#fff;border-radius:0 0 4px 0;display:flex;flex-direction:column;align-items:center;box-sizing:border-box;padding-right:4px}
.sp{height:13px;flex:none}
.fl x-tri{--c:#555;margin:12px 0}
hr{width:34px;border:0;border-top:2px solid #bbb;margin:11px 0 9px;flex:none}`,
`<svg width="1495" height="1008" viewBox="627 283 1495 1008">${cad()}</svg>
<div class="hl"><svg width="10" height="16" viewBox="0 0 10 16"><path d="M8 2L3 8l5 6" fill="none" stroke="#999" stroke-width="1.5"/></svg></div>
<div class="hr"><svg width="10" height="16" viewBox="0 0 10 16"><path d="M2 2l5 6-5 6" fill="none" stroke="#999" stroke-width="1.5"/></svg></div>
<div class="fl"><div style="height:19px;flex:none"></div><x-icon name="orbit" vb="28" size="30"></x-icon><div class="sp"></div><x-icon name="d3" vb="28" size="30"></x-icon><div class="sp"></div><x-icon name="cube" vb="28" size="30"></x-icon><x-tri></x-tri><x-icon name="cubeb" vb="28" size="30"></x-icon><x-tri></x-tri><x-icon name="bracket" vb="28" size="30"></x-icon><div class="sp"></div><x-icon name="dcube" vb="30" size="30"></x-icon><hr><x-icon name="list" vb="30" size="30"></x-icon></div>`);

def('right-panel',`:host{display:flex;flex-direction:column;flex:1;min-width:0;background:#fff;overflow:hidden;height:1008px;margin-left:5px;font-size:18px;color:#444}
.h{height:44px;background:#f0f0f0;display:flex;align-items:center;padding-left:9px;white-space:nowrap;flex:none;gap:18px;overflow:hidden}
.tb{margin:3px 0 0 5px;height:35px;border:1px solid #e3e3e3;border-bottom:0;border-right:0;border-radius:5px 0 0 0;color:${B};padding-left:10px;line-height:34px;white-space:nowrap;overflow:hidden;flex:none}
.bx{margin:3px 0 0 6px;height:33px;border:1px solid #e4e4e4;border-right:0;border-bottom:0;flex:none}
.rw{height:31.4px;box-sizing:border-box;border-bottom:1px solid #e4e4e4;margin-left:6px;border-left:1px solid #e4e4e4;display:flex;align-items:center;white-space:nowrap;flex:none;overflow:hidden}
.rw .i{margin-left:27px;border-left:1px solid #e4e4e4;height:100%;flex:1}
.rw tree-exp{margin-left:19px}.rw.top tree-exp{margin-left:5px}.rw.top span{margin-left:12px}`,
()=>{let r='<div class="rw top"><tree-exp></tree-exp><span>所有构件类型</span></div><div class="rw"><tree-exp></tree-exp></div>';for(let i=2;i<27;i++){r+=([10,13,18].includes(i))?'<div class="rw"><tree-exp></tree-exp></div>':'<div class="rw"><div class="i"></div></div>'}return `<div class="h">${GRIP}<span>显示设置</span></div><div class="tb">图元显示</div><div class="bx"></div>${r}`});

def('gtj-app',`:host{display:flex;flex-direction:column;width:2176px;height:1291px;overflow:hidden;background:#f0f0f0;font-family:"Noto Sans CJK SC","Liberation Sans",sans-serif}
.main{display:flex;flex:1;align-items:flex-start;min-height:0}
.col{display:flex;flex-direction:column;gap:8px;margin-left:7px;flex:none}`,
`<gtj-title></gtj-title><gtj-menu></gtj-menu>
<gtj-ribbon>
<rb-group label="选择" lp="8" w="350" pl="0"><rb-select>选择</rb-select><rb-grid cols="149 120" style="margin-left:-5px"><rb-small icon="pick">拾取构件</rb-small><rb-small icon="findel">查找图元</rb-small><rb-small icon="batch">批量选择</rb-small><rb-small icon="filter">过滤图元</rb-small><rb-small icon="propsel" arrow>按属性选择</rb-small></rb-grid></rb-group>
<rb-group label="图纸操作" arrow w="304" pl="14"><rb-grid cols="120 170"><rb-small icon="scale">设置比例</rb-small><rb-small icon="floor">识别楼层表</rb-small><rb-small icon="replace">查找替换</rb-small><rb-small icon="cadopt" arrow>CAD识别选项</rb-small><rb-small icon="restore">还原CAD</rb-small></rb-grid></rb-group>
<rb-group label="通用操作" arrow w="414" pl="15"><rb-grid cols="100 167 130"><rb-small icon="define">定义</rb-small><rb-small icon="copyto" arrow>复制到其它层</rb-small><rb-small icon="twopoint" arrow>两点辅轴</rb-small><rb-small icon="cloud">云检查</rb-small><rb-small icon="autoalign" off arrow style="--c:#ccc">自动平齐顶板</rb-small><rb-small icon="lendim" arrow>长度标注</rb-small><rb-small icon="lock" off arrow style="--c:#ccc">锁定</rb-small><rb-small icon="extract" arrow>图元提取</rb-small><rb-small icon="convert" off>转换图元</rb-small></rb-grid></rb-group>
<rb-group label="修改" arrow w="356" pl="15"><rb-grid cols="80 82 94 90"><rb-small icon="del">删除</rb-small><rb-small icon="rotate">旋转</rb-small><rb-small icon="trim" off>修剪</rb-small><rb-small icon="offset" off>偏移</rb-small><rb-small icon="copy">复制</rb-small><rb-small icon="mirror">镜像</rb-small><rb-small icon="alignx" arrow>对齐</rb-small><rb-small icon="merge" off>合并</rb-small><rb-small icon="move">移动</rb-small><rb-small icon="extend" off>延伸</rb-small><rb-small icon="breakx" off>打断</rb-small><rb-small icon="split" off>分割</rb-small></rb-grid></rb-group>
<rb-group label="绘图" lp="3" w="104" pl="13"><rb-grid cols="49 44"><rb-small icon="point"></rb-small><rb-small icon="gauge"></rb-small><rb-small icon="line"></rb-small><rb-small icon="rectd"></rb-small><rb-small icon="arc" arrow style="--c:#bbb;gap:0"></rb-small></rb-grid></rb-group>
<rb-group label="识别钢柱" w="210" pl="10"><rb-big icon="idtable" w="96">识别构件表</rb-big><rb-big icon="idsteel" w="98">识别钢柱</rb-big></rb-group>
<rb-group label="节点、细部" w="344" pl="8"><rb-big icon="gennode" w="84">生成节点</rb-big><rb-big icon="gendetail" w="82" arrow>生成细部</rb-big><rb-grid cols="160" style="margin-left:5px"><rb-small icon="editnode">编辑节点/细部</rb-small><rb-small icon="missnode">节点缺失检查</rb-small></rb-grid></rb-group>
<rb-group label="钢柱二次编辑" left lp="23" w="120" pl="1"><rb-big icon="ctrl" w="96">位置控点</rb-big></rb-group>
</gtj-ribbon>
<gtj-combos><gtj-combo>首层</gtj-combo><gtj-combo>钢结构</gtj-combo><gtj-combo>钢柱</gtj-combo><gtj-combo>GZ1</gtj-combo></gtj-combos>
<div class="main">
<nav-panel>
<nav-item>构造柱(Z)</nav-item><nav-item>砌体柱(Z)</nav-item><nav-item>约束边缘非阴影...</nav-item>
<nav-cat icon="wall">墙</nav-cat><nav-cat icon="door">门窗洞</nav-cat><nav-cat icon="beam">梁</nav-cat><nav-cat icon="slab">板</nav-cat><nav-cat icon="prefab">装配式</nav-cat><nav-cat icon="steel" on>钢结构</nav-cat>
<nav-item on>钢柱(Z)</nav-item><nav-item>型钢砼柱(Z)</nav-item><nav-item>钢梁(L)</nav-item><nav-item dot="97" dy="7">钢板(B)</nav-item><nav-item>栓钉</nav-item><nav-item dot="151" dy="7">桁架楼承板(B)</nav-item><nav-item>组合板(压型钢板).</nav-item><nav-item>组合板(混凝土)(B)</nav-item><nav-item dot="168" dy="7">组合板受力筋(S)</nav-item><nav-item dot="148" dy="7">组合板负筋(F)</nav-item>
<nav-cat icon="stair">楼梯</nav-cat>
</nav-panel>
<div class="col">
<dock-panel tabs="构件列表,图纸管理" active="图纸管理" h="397"><draw-toolbar></draw-toolbar><draw-table></draw-table></dock-panel>
<dock-panel tabs="属性列表,图层管理" active="属性列表" h="603" style="border-bottom:0"><prop-table>
<prop-row blue v="GZ1">名称</prop-row><prop-row v="GZ350*300*12(ZDY)">规格</prop-row><prop-row blue gray v="钢柱">结构类别</prop-row><prop-row v="空腹钢柱">清单类型</prop-row><prop-row v="Q235B">材质</prop-row><prop-row>定额子目</prop-row><prop-row v="5.5">顶标高(m)</prop-row><prop-row v="-0.25">底标高(m)</prop-row><prop-row>备注</prop-row>
</prop-table></dock-panel>
</div>
<cad-canvas></cad-canvas>
<right-panel></right-panel>
</div>`);
</script></body></html>
